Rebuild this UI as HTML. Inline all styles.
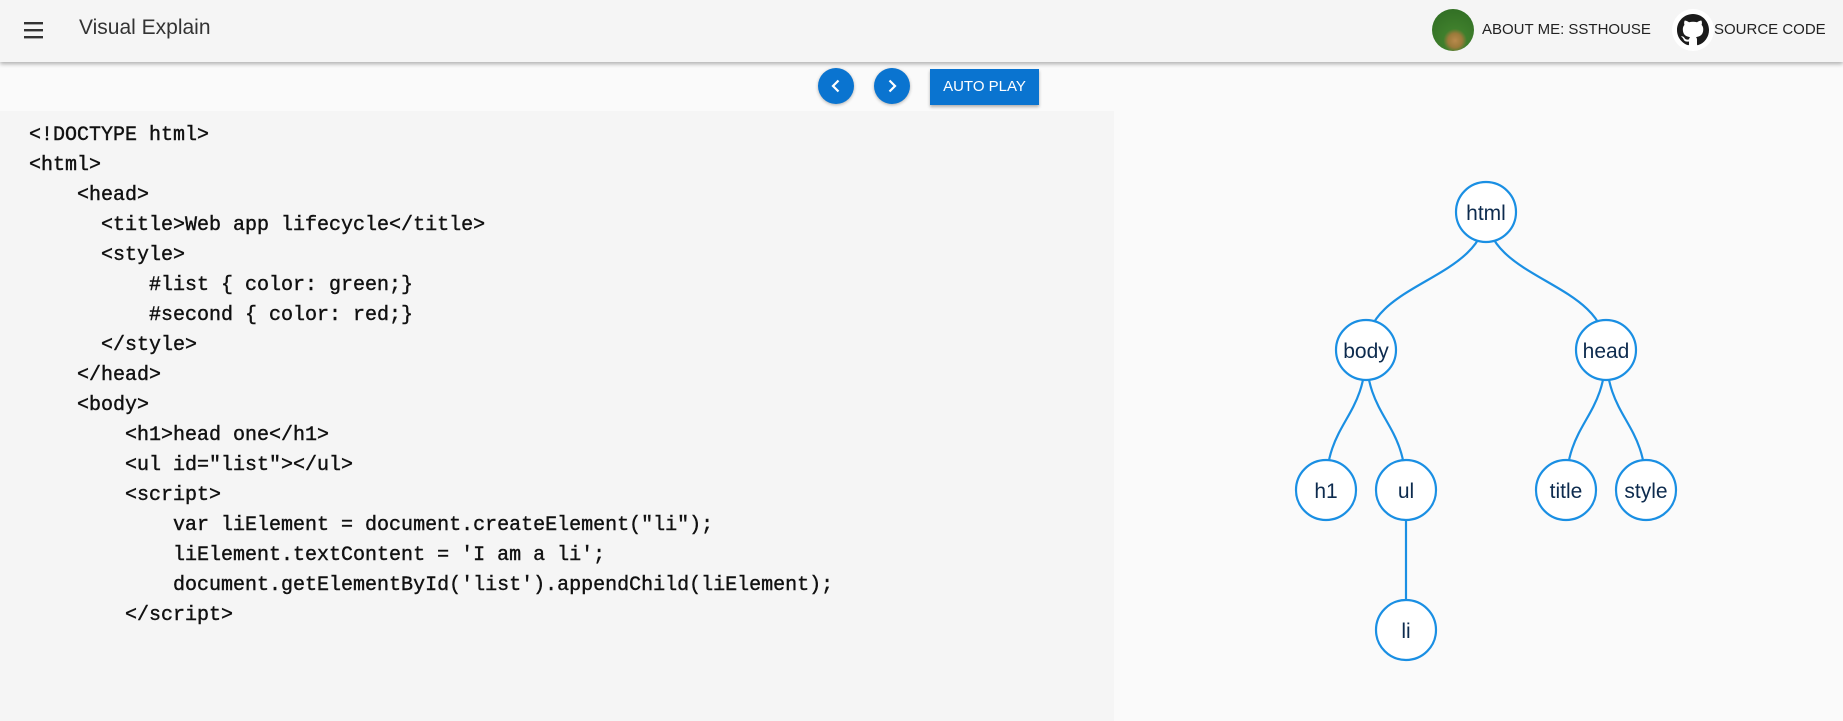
<!DOCTYPE html>
<html><head><meta charset="utf-8"><style>
body{margin:0;width:1843px;height:721px;overflow:hidden;background:#fafafa;font-family:"Liberation Sans",sans-serif;position:relative}
.hdr{position:absolute;left:0;top:0;width:1843px;height:62px;background:#f5f5f5;box-shadow:0 2px 4px rgba(0,0,0,.3);z-index:2}
.code{position:absolute;left:0;top:111px;width:1114px;height:610px;background:#f5f5f5}
pre{margin:0;position:absolute;left:29px;top:121px;font-family:"Liberation Mono",monospace;font-size:20px;line-height:30px;color:#111;letter-spacing:0;-webkit-text-stroke:0.4px #111}
.btn{position:absolute;top:68px;width:36px;height:36px;border-radius:50%;background:#0a74d0;box-shadow:0 1px 3px rgba(0,0,0,.3)}
</style></head><body>
<div class="hdr">
 <svg style="position:absolute;left:23px;top:20px" width="22" height="20"><rect x="1" y="2" width="19" height="2.4" fill="#333"/><rect x="1" y="9" width="19" height="2.4" fill="#333"/><rect x="1" y="16" width="19" height="2.4" fill="#333"/></svg>
 <div style="position:absolute;left:79px;top:16px;font-size:21px;color:#333">Visual Explain</div>
 <div style="position:absolute;left:1432px;top:9px;width:42px;height:42px;border-radius:50%;background:radial-gradient(circle at 55% 75%,#b98a4c 0,#9b7a3a 18%,#3f7f2c 30%,#2d6a22 100%)"></div>
 <div style="position:absolute;left:1482px;top:21px;font-size:15px;color:#222">ABOUT ME: SSTHOUSE</div>
 <div style="position:absolute;left:1672px;top:9px;width:42px;height:42px;border-radius:50%;background:#fff"></div>
 <svg style="position:absolute;left:1677px;top:14px" width="32" height="32" viewBox="0 0 16 16"><path fill="#1b1b1b" d="M8 0C3.580 0 0 3.58 0 8c0 3.54 2.29 6.53 5.47 7.59.4.07.55-.17.55-.38 0-.19-.01-.82-.01-1.49-2.01.37-2.53-.49-2.690-.94-.09-.23-.48-.94-.82-1.13-.28-.15-.68-.52-.01-.53.63-.01 1.08.58 1.23.82.72 1.21 1.87.87 2.33.66.07-.52.28-.87.51-1.07-1.78-.2-3.64-.89-3.64-3.95 0-.87.31-1.59.82-2.15-.08-.2-.36-1.02.08-2.12 0 0 .67-.21 2.2.82.64-.18 1.32-.27 2-.27.68 0 1.36.09 2 .27 1.53-1.04 2.2-.82 2.2-.82.44 1.1.16 1.92.08 2.12.51.56.82 1.270.82 2.15 0 3.07-1.87 3.75-3.65 3.95.29.25.54.73.54 1.48 0 1.07-.01 1.93-.01 2.2 0 .21.15.46.55.38A8.013 8.013 0 0016 8c0-4.42-3.58-8-8-8z"/></svg>
 <div style="position:absolute;left:1714px;top:21px;font-size:15px;color:#222">SOURCE CODE</div>
</div>
<div class="btn" style="left:818px"><svg width="36" height="36"><path d="M20.5 12.5 15 18l5.5 5.5" stroke="#fff" stroke-width="2.2" fill="none"/></svg></div>
<div class="btn" style="left:874px"><svg width="36" height="36"><path d="M15.5 12.5 21 18l-5.5 5.5" stroke="#fff" stroke-width="2.2" fill="none"/></svg></div>
<div style="position:absolute;left:930px;top:69px;width:109px;height:36px;background:#0a74d0;box-shadow:0 2px 3px rgba(0,0,0,.3);color:#fff;font-size:15px;line-height:36px;text-align:center">AUTO PLAY</div>
<div class="code"></div>
<pre>&lt;!DOCTYPE html&gt;
&lt;html&gt;
    &lt;head&gt;
      &lt;title&gt;Web app lifecycle&lt;/title&gt;
      &lt;style&gt;
          #list { color: green;}
          #second { color: red;}
      &lt;/style&gt;
    &lt;/head&gt;
    &lt;body&gt;
        &lt;h1&gt;head one&lt;/h1&gt;
        &lt;ul id="list"&gt;&lt;/ul&gt;
        &lt;script&gt;
            var liElement = document.createElement("li");
            liElement.textContent = 'I am a li';
            document.getElementById('list').appendChild(liElement);
        &lt;/script&gt;</pre>
<svg style="position:absolute;left:0;top:0" width="1843" height="721">
<g fill="none" stroke="#1a8fe3" stroke-width="2.2">
<path d="M1486 212C1486 281 1366 281 1366 350"/>
<path d="M1486 212C1486 281 1606 281 1606 350"/>
<path d="M1366 350C1366 420 1326 420 1326 490"/>
<path d="M1366 350C1366 420 1406 420 1406 490"/>
<path d="M1606 350C1606 420 1566 420 1566 490"/>
<path d="M1606 350C1606 420 1646 420 1646 490"/>
<path d="M1406 490L1406 630"/>
</g>
<g fill="#fff" stroke="#1a8fe3" stroke-width="2.2">
<circle cx="1486" cy="212" r="30"/><circle cx="1366" cy="350" r="30"/><circle cx="1606" cy="350" r="30"/>
<circle cx="1326" cy="490" r="30"/><circle cx="1406" cy="490" r="30"/><circle cx="1566" cy="490" r="30"/><circle cx="1646" cy="490" r="30"/><circle cx="1406" cy="630" r="30"/>
</g>
<g font-family="Liberation Sans,sans-serif" font-size="21" fill="#0d2b4e" text-anchor="middle">
<text x="1486" y="220">html</text><text x="1366" y="358">body</text><text x="1606" y="358">head</text>
<text x="1326" y="498">h1</text><text x="1406" y="498">ul</text><text x="1566" y="498">title</text><text x="1646" y="498">style</text><text x="1406" y="638">li</text>
</g>
</svg>
</body></html>
